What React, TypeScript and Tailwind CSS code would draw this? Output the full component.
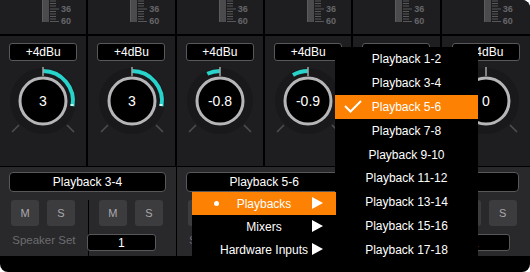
import React from "react";

const CYAN = "#27d3ca";
const ORANGE = "#fd8204";

function Meter() {
  const ticks = [1, 3.5, 6, 9, 11.5, 14, 16.5, 19, 21.5];
  return (
    <div className="flex h-[34px] pl-[42px]">
      <div className="w-[7px] h-[22px] bg-[#4b4b4e] border-l border-[#5c5c5f]" />
      <svg width="11" height="24" className="ml-[1px] block">
        {ticks.map((y, i) => (
          <line
            key={i}
            x1="0"
            y1={y}
            x2={i === 3 || i === 8 ? 9 : 6}
            y2={y}
            stroke="#58585b"
            strokeWidth="1"
          />
        ))}
      </svg>
      <div className="flex flex-col pt-[3px] text-[9px] leading-[12px] font-bold text-[#66666a]">
        <span>36</span>
        <span>60</span>
      </div>
    </div>
  );
}

function Knob({ value, arc, tip }: { value: string; arc?: string; tip?: [number, number] }) {
  return (
    <svg width="88" height="80" viewBox="0 0 88 80" className="block">
      <circle cx="44" cy="40" r="33" fill="#19191b" />
      <line x1="20" y1="64" x2="13" y2="71" stroke="#505053" strokeWidth="1.5" />
      <line x1="68" y1="64" x2="75" y2="71" stroke="#505053" strokeWidth="1.5" />
      {arc && <path d={arc} stroke={CYAN} strokeWidth="4" fill="none" />}
      {tip && <rect x={tip[0]} y={tip[1]} width="3" height="2" fill="#c9f7f3" />}
      <circle cx="44" cy="40" r="23" fill="#000" stroke="#b6b6b8" strokeWidth="3" />
      <line x1="44" y1="6" x2="44" y2="15" stroke="#a4a4a6" strokeWidth="1.5" />
      <text
        x="44"
        y="45"
        textAnchor="middle"
        fill="#fff"
        fontSize="14"
        fontFamily="Liberation Sans, Arial, sans-serif"
      >
        {value}
      </text>
    </svg>
  );
}

const knobs: { value: string; arc?: string; tip?: [number, number] }[] = [
  { value: "3", arc: "M44 10 A30 30 0 0 1 73.5 45.2", tip: [71.5, 43] },
  { value: "3", arc: "M44 10 A30 30 0 0 1 73.5 45.2", tip: [71.5, 43] },
  { value: "-0.8", arc: "M31.3 12.8 A30 30 0 0 1 44 10" },
  { value: "-0.9", arc: "M29 14 A30 30 0 0 1 44 10" },
  { value: "0" },
  { value: "0" },
];

function SmallBtn({ label }: { label: string }) {
  return (
    <div className="w-[28px] h-[26px] rounded-[3px] bg-[#3c3c3f] flex items-center justify-center text-[11px] text-[#a9a9ac]">
      {label}
    </div>
  );
}

function Pair({ label, last }: { label: string; last?: boolean }) {
  return (
    <div className={last ? "flex flex-col" : "flex flex-col border-r border-black"}>
      <div className="mt-[5px] ml-[9px] w-[157px] h-[20px] rounded-[4px] border border-[#58585b] bg-black text-white text-[12px] flex items-center justify-center">
        {label}
      </div>
      <div className="mt-[8px] grid grid-cols-2 flex-1">
        <div className="flex flex-col">
          <div className="flex gap-[8px] pl-[11px]">
            <SmallBtn label="M" />
            <SmallBtn label="S" />
          </div>
          <div className="mt-[7px] text-center text-[11.5px] leading-[14px] text-[#6c6c70]">
            Speaker Set
          </div>
        </div>
        <div className="flex flex-col border-l border-black">
          <div className="flex gap-[8px] pl-[10px]">
            <SmallBtn label="M" />
            <SmallBtn label="S" />
          </div>
          <div className="mt-[8px] ml-[-2px] w-[69px] h-[17px] rounded-[3px] border border-[#58585b] bg-black text-white text-[12px] flex items-center justify-center">
            1
          </div>
        </div>
      </div>
    </div>
  );
}

const sources = [
  "Playback 1-2",
  "Playback 3-4",
  "Playback 5-6",
  "Playback 7-8",
  "Playback 9-10",
  "Playback 11-12",
  "Playback 13-14",
  "Playback 15-16",
  "Playback 17-18",
];

function Arrow() {
  return (
    <svg width="11" height="12" viewBox="0 0 11 12" className="absolute right-[13px] top-[5px]">
      <path d="M0 0 L11 6 L0 12 Z" fill="#fff" />
    </svg>
  );
}

export default function App() {
  return (
    <div className="w-[530px] h-[272px] bg-white font-['Liberation_Sans',Arial,sans-serif]">
      <div className="relative w-full h-full bg-black rounded-[8px] rounded-tl-none overflow-hidden">
        <div className="h-[256px] flex flex-col bg-[#1e1e20]">
          <div className="grid grid-cols-6 border-b-2 border-black">
            {knobs.map((_, i) => (
              <div key={i} className={i < 5 ? "border-r-2 border-black" : ""}>
                <Meter />
              </div>
            ))}
          </div>
          <div className="grid grid-cols-6 h-[130px]">
            {knobs.map((k, i) => (
              <div key={i} className={i < 5 ? "flex flex-col items-center pt-[7px] border-r-2 border-black" : "flex flex-col items-center pt-[7px]"}>
                <div className="w-[68px] h-[18px] rounded-[3px] border border-[#58585b] bg-black text-white text-[12px] flex items-center justify-center">
                  +4dBu
                </div>
                <Knob value={k.value} arc={k.arc} tip={k.tip} />
              </div>
            ))}
          </div>
          <div className="grid grid-cols-3 flex-1 bg-[#29292b] border-t border-black">
            <Pair label="Playback 3-4" />
            <Pair label="Playback 5-6" />
            <Pair label="Playback 7-8" last />
          </div>
        </div>

        {/* source submenu */}
        <div className="absolute left-[335px] top-[47px] w-[143px] h-[215px] bg-black flex flex-col text-white text-[12px]">
          {sources.map((s, i) => (
            <div
              key={s}
              className={
                i === 2
                  ? "relative h-[24px] flex items-center justify-center bg-[#fd8204]"
                  : "relative h-[24px] flex items-center justify-center"
              }
            >
              {i === 2 && (
                <svg width="18" height="14" viewBox="0 0 18 14" className="absolute left-[9px] top-[5px]">
                  <path d="M1 6 L6.5 11.5 L17 1" stroke="#fff" strokeWidth="2" fill="none" />
                </svg>
              )}
              {s}
            </div>
          ))}
        </div>

        {/* category menu */}
        <div className="absolute left-[192px] top-[192px] w-[144px] h-[70px] bg-black flex flex-col text-white text-[12px]">
          <div className="relative h-[23px] flex items-center justify-center" style={{ backgroundColor: ORANGE }}>
            <span className="absolute left-[22px] top-[9px] w-[5px] h-[5px] rounded-full bg-white" />
            Playbacks
            <Arrow />
          </div>
          <div className="relative h-[23px] flex items-center justify-center">
            Mixers
            <Arrow />
          </div>
          <div className="relative h-[23px] flex items-center justify-center">
            Hardware Inputs
            <Arrow />
          </div>
        </div>
      </div>
    </div>
  );
}
